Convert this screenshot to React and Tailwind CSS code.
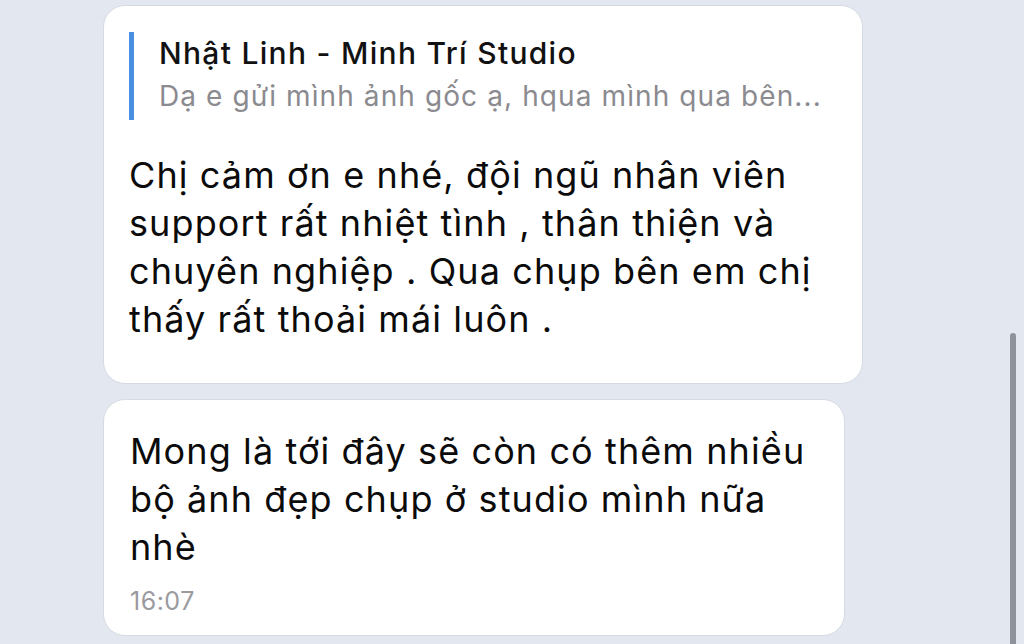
import React from 'react';

const font = { fontFamily: 'Inter, "Noto Sans", sans-serif' };

const Line = ({ children }) => <span className="block whitespace-nowrap">{children}</span>;

const App = () => {
    return (
        <div className="relative h-[644px] w-[1024px] overflow-hidden bg-[#e2e7f0]" style={font}>
            <div className="flex flex-col items-start gap-[15px] pt-[5px] pl-[103px]">
                {/* reply bubble */}
                <div className="w-[760px] rounded-[22px] border border-[#d6dbe3] bg-white pt-[26px] pr-[40px] pb-[40px] pl-[25px]">
                    <div className="flex h-[88px] border-l-[5px] border-[#4a90e2] pl-[25px]">
                        <div className="flex flex-col">
                            <span className="text-[30px] leading-[42px] font-medium text-[#111] tracking-[1.3px]">Nhật Linh - Minh Trí Studio</span>
                            <span className="mt-[2px] whitespace-nowrap text-[28px] leading-[40px] text-[#8a8a8f] tracking-[1.1px]">Dạ e gửi mình ảnh gốc ạ, hqua mình qua bên...</span>
                        </div>
                    </div>
                    <div className="mt-[31px] text-[36px] leading-[48px] text-[#0b0b0b] tracking-[1.1px]">
                        <Line>Chị cảm ơn e nhé, đội ngũ nhân viên</Line>
                        <Line>support rất nhiệt tình , thân thiện và</Line>
                        <Line>chuyên nghiệp . Qua chụp bên em chị</Line>
                        <Line>thấy rất thoải mái luôn .</Line>
                    </div>
                </div>

                <div className="w-[742px] rounded-[22px] border border-[#d6dbe3] bg-white pt-[27px] pr-[40px] pb-[20px] pl-[26px]">
                    <div className="text-[36px] leading-[48px] text-[#0b0b0b] tracking-[1.1px]">
                        <Line>Mong là tới đây sẽ còn có thêm nhiều</Line>
                        <Line>bộ ảnh đẹp chụp ở studio mình nữa</Line>
                        <Line>nhè</Line>
                    </div>
                    <div className="mt-[16px] text-[25px] leading-[28px] text-[#9a9a9f] tracking-[0.5px]">16:07</div>
                </div>
            </div>

            {/* scroll indicator */}
            <div className="absolute top-[333px] left-[1010px] h-[330px] w-[6px] rounded-full bg-[#8e929a]" />
        </div>
    );
};

export default App;
